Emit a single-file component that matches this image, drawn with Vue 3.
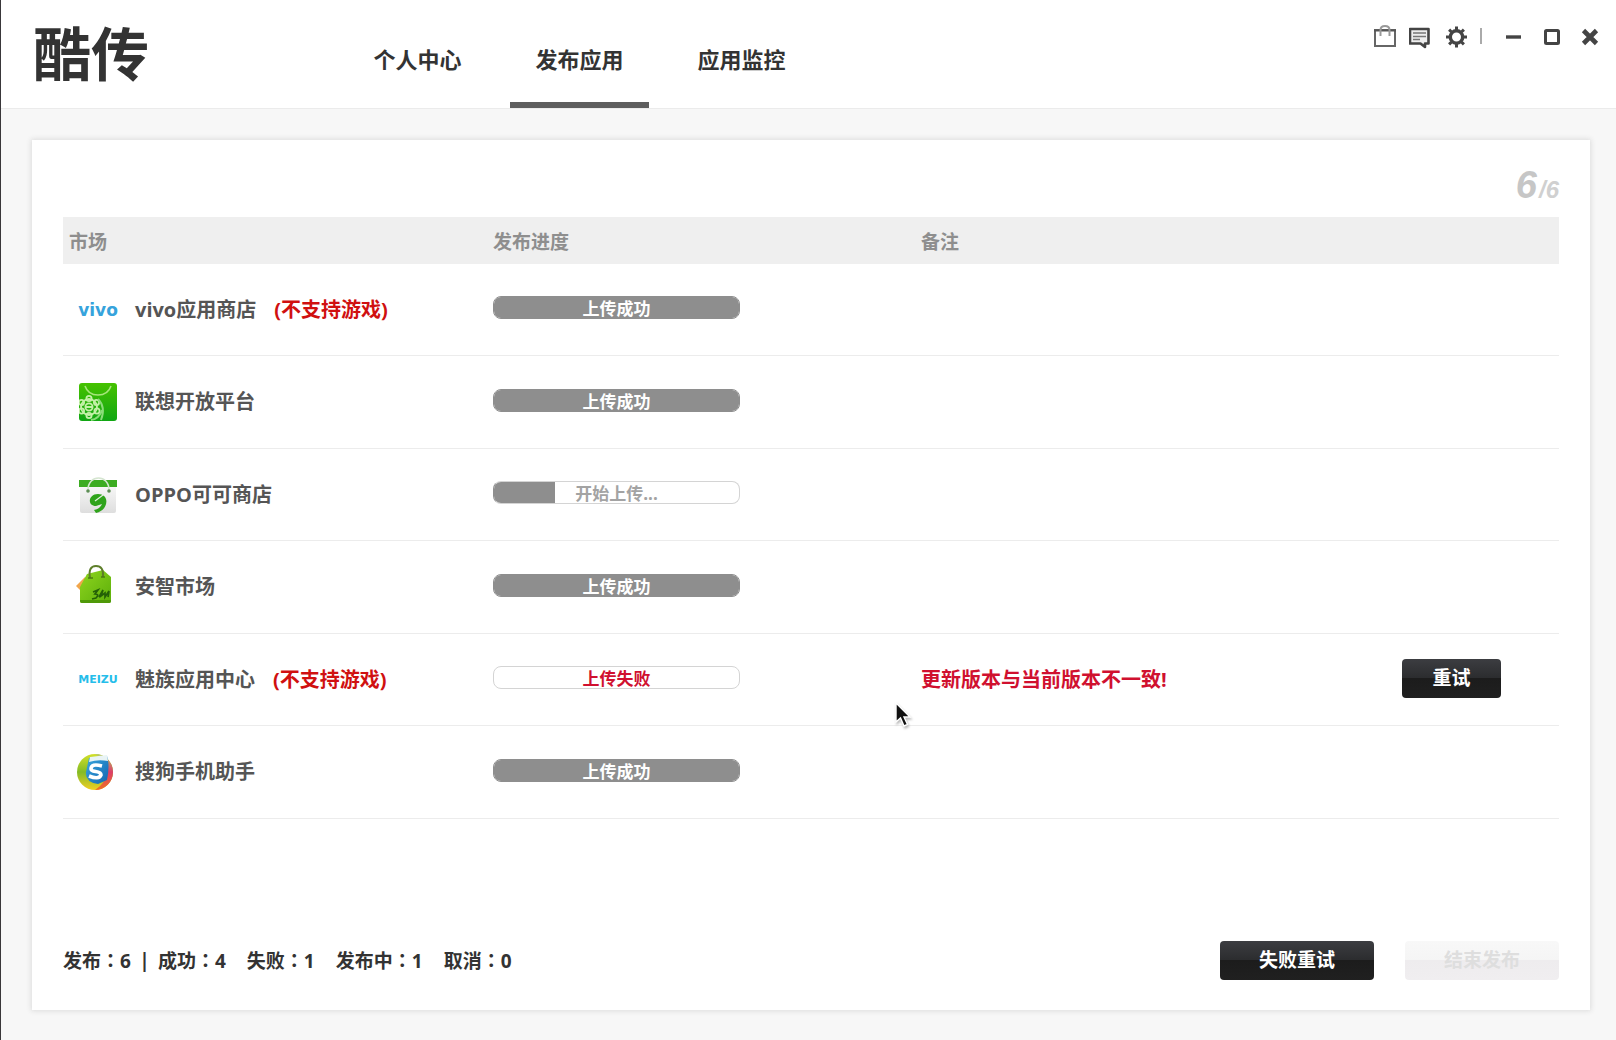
<script setup>
import { ref } from 'vue'

const tabs = ref([
  { label: '个人中心', active: false },
  { label: '发布应用', active: true },
  { label: '应用监控', active: false },
])

const markets = ref([
  { icon: 'vivo', name: 'vivo应用商店', note: '(不支持游戏)', state: 'done', label: '上传成功', progress: 100 },
  { icon: 'lenovo', name: '联想开放平台', state: 'done', label: '上传成功', progress: 100 },
  { icon: 'oppo', name: 'OPPO可可商店', state: 'running', label: '开始上传...', progress: 25 },
  { icon: 'anzhi', name: '安智市场', state: 'done', label: '上传成功', progress: 100 },
  { icon: 'meizu', name: '魅族应用中心', note: '(不支持游戏)', state: 'failed', label: '上传失败', progress: 0, remark: '更新版本与当前版本不一致!' },
  { icon: 'sogou', name: '搜狗手机助手', state: 'done', label: '上传成功', progress: 100 },
])

const totals = ref([
  { label: '成功', value: 4 },
  { label: '失败', value: 1 },
  { label: '发布中', value: 1 },
  { label: '取消', value: 0 },
])
</script>

<template>
  <div class="window">
    <header class="topbar">
      <h1 class="brand">酷传</h1>
      <nav class="tabs">
        <a v-for="tab in tabs" :key="tab.label" href="#" class="tab" :class="{ active: tab.active }">{{ tab.label }}</a>
      </nav>
      <div class="tools">
        <div class="tool-group">
          <button type="button" class="tool" aria-label="商店">
            <svg viewBox="0 0 24 24" fill="none" stroke="#666">
              <rect x="2" y="5" width="20" height="16" stroke-width="2" />
              <path d="M1 5.500H23" stroke="#555" stroke-width="2" />
              <path d="M7.500 11V5Q7.500 1 12 1T16.500 5V11" stroke="#999" stroke-width="2" />
            </svg>
          </button>
          <button type="button" class="tool" aria-label="消息">
            <svg viewBox="0 0 24 24" fill="none" stroke="#444">
              <path d="M1 4H19.500V18.500H16V22L11.500 18.500H1Z" fill="#eee" stroke-width="2.600" stroke-linejoin="round" />
              <path d="M4 8H17M4 11.500H17M4 14.500H11" stroke="#777" stroke-width="1.600" />
            </svg>
          </button>
          <button type="button" class="tool" aria-label="设置">
            <svg viewBox="0 0 24 24" fill="none" stroke="#444">
              <circle cx="11.500" cy="12" r="6.200" stroke-width="3.400" />
              <path d="M11.500 1.500V5M11.500 19V22.500M1 12H4.500M18.500 12H22M4.100 4.600L6.500 7M16.500 17L18.900 19.400M4.100 19.400L6.500 17M16.500 7L18.900 4.600" stroke-width="3" />
            </svg>
          </button>
        </div>
        <span class="divider"></span>
        <div class="tool-group window-controls">
          <button type="button" class="tool" aria-label="最小化">
            <svg viewBox="0 0 24 24" stroke="#444"><path d="M4 12H19" stroke-width="3.400" /></svg>
          </button>
          <button type="button" class="tool" aria-label="最大化">
            <svg viewBox="0 0 24 24" fill="none" stroke="#444"><rect x="5.500" y="5.500" width="13" height="13" rx="1" stroke-width="3" /></svg>
          </button>
          <button type="button" class="tool" aria-label="关闭">
            <svg viewBox="0 0 24 24" stroke="#444"><path d="M5.500 5.500L18.500 18.500M18.500 5.500L5.500 18.500" stroke-width="4.600" /></svg>
          </button>
        </div>
      </div>
    </header>

    <main class="content">
      <section class="card">
        <p class="counter"><b>6</b><span>/6</span></p>

        <table class="markets">
          <colgroup>
            <col class="col-market" />
            <col class="col-progress" />
            <col />
            <col class="col-action" />
          </colgroup>
          <thead>
            <tr>
              <th class="first">市场</th>
              <th>发布进度</th>
              <th>备注</th>
              <th></th>
            </tr>
          </thead>
          <tbody>
            <tr v-for="m in markets" :key="m.name">
              <td>
                <div class="market">
                  <span class="logo">
                    <span v-if="m.icon === 'vivo'" class="word vivo">vivo</span>
                    <svg v-else-if="m.icon === 'lenovo'" viewBox="0 0 40 40">
                      <defs>
                        <linearGradient id="lenovo-bg" x1="0" y1="0" x2="0" y2="1">
                          <stop offset="0" stop-color="#46c200" />
                          <stop offset="1" stop-color="#10a613" />
                        </linearGradient>
                        <clipPath id="lenovo-clip"><rect x="1" y="1" width="38" height="38" rx="3" /></clipPath>
                      </defs>
                      <rect x="1" y="1" width="38" height="38" rx="3" fill="url(#lenovo-bg)" />
                      <g clip-path="url(#lenovo-clip)" fill="none" stroke="#c4f0a8">
                        <path d="M7 4Q10 13 20 13T33 4" stroke="#a5e67a" stroke-width="1.600" />
                        <g stroke-width="1.800">
                          <circle cx="11" cy="25" r="3.600" />
                          <circle cx="11" cy="25" r="8" />
                          <circle cx="11" cy="16.500" r="2.600" />
                          <circle cx="18.500" cy="20.500" r="2.600" />
                          <circle cx="19" cy="29" r="2.600" />
                          <circle cx="11" cy="33.500" r="2.600" />
                          <circle cx="3.500" cy="29" r="2.600" />
                          <circle cx="3.500" cy="20.500" r="2.600" />
                          <path d="M8 25H14" />
                        </g>
                        <path d="M20 17Q28 25 23 38M13 38Q21 37 24 28" stroke="#8bdc79" stroke-width="2" />
                      </g>
                    </svg>
                    <svg v-else-if="m.icon === 'oppo'" viewBox="0 0 40 40">
                      <defs>
                        <linearGradient id="oppo-bag" x1="0" y1="0" x2="0" y2="1">
                          <stop offset="0" stop-color="#f7f7f7" />
                          <stop offset="1" stop-color="#dedede" />
                        </linearGradient>
                      </defs>
                      <path d="M2 11H38V36Q38 38 36 38H4Q2 38 2 36Z" fill="url(#oppo-bag)" />
                      <rect x="1" y="5" width="38" height="7" fill="#3cac22" />
                      <path d="M10 15C10 -1 31 -1 31 15" fill="none" stroke="#d5e5d0" stroke-width="1.600" />
                      <circle cx="10" cy="16" r="1.800" fill="#5d8e55" />
                      <circle cx="31" cy="16" r="1.800" fill="#5d8e55" />
                      <path d="M20 19C10 19 9 31 18 31L24 29Q22 34 16 35L18 38C28 36 31 25 26 21Q24 19 20 19Z" fill="#2fa31b" />
                      <path d="M17 26L25 20" stroke="#e4f2e0" stroke-width="1.200" />
                    </svg>
                    <svg v-else-if="m.icon === 'anzhi'" viewBox="0 2 40 40">
                      <defs>
                        <linearGradient id="anzhi-bag" x1="0" y1="0" x2="1" y2="1">
                          <stop offset="0" stop-color="#8fd51f" />
                          <stop offset="1" stop-color="#5caf0a" />
                        </linearGradient>
                      </defs>
                      <path d="M-2 21L7 12L11 23L3 26Z" fill="#f1a64c" />
                      <path d="M9 9L25 5L33 12V36Q33 38 31 38H4Q2 38 2 36V22Z" fill="url(#anzhi-bag)" />
                      <path d="M2 35V36Q2 38 4 38H31Q33 38 33 36V35Z" fill="#4f9908" />
                      <path d="M12 13Q10 1 18 1T25 12" fill="none" stroke="#5e7e2a" stroke-width="2" />
                      <path d="M10 13H15M23 12H27" stroke="#4b7c10" stroke-width="1.500" />
                      <path d="M15 27L20 25L17 29Q22 29 18 33L14 34M21 32L25 25L23 31L27 28V32L31 26L30 32" fill="none" stroke="#246007" stroke-width="1.700" />
                    </svg>
                    <span v-else-if="m.icon === 'meizu'" class="word meizu">MEIZU</span>
                    <svg v-else viewBox="0 0 40 40">
                      <defs>
                        <linearGradient id="sogou-left" x1="0" y1="0" x2="0" y2="1">
                          <stop offset="0" stop-color="#d3e02a" />
                          <stop offset=".5" stop-color="#83bb25" />
                          <stop offset="1" stop-color="#f1cf23" />
                        </linearGradient>
                        <linearGradient id="sogou-right" x1="0" y1="0" x2="0" y2="1">
                          <stop offset="0" stop-color="#b4cc69" />
                          <stop offset=".5" stop-color="#dd3d69" />
                          <stop offset="1" stop-color="#ef7125" />
                        </linearGradient>
                        <linearGradient id="sogou-mid" x1="0" y1="0" x2="1" y2="1">
                          <stop offset="0" stop-color="#3aa9df" />
                          <stop offset="1" stop-color="#1265b1" />
                        </linearGradient>
                      </defs>
                      <circle cx="17" cy="20" r="18" fill="url(#sogou-left)" />
                      <path d="M17 2A18 18 0 0 1 17 38Q28 31 29 20T17 2Z" fill="url(#sogou-right)" />
                      <path d="M11 6L29 4Q32 13 29 28L20 32Q7 30 8 20Z" fill="url(#sogou-mid)" />
                      <path d="M12 5L29 3L30 9Q20 7 11 10Z" fill="#e9f4f5" />
                      <path d="M24 14Q13 11 13 17C13 21 23 18 23 23Q21 28 11 24" fill="none" stroke="#fff" stroke-width="3.600" />
                    </svg>
                  </span>
                  <span class="name">{{ m.name }}</span>
                  <span v-if="m.note" class="note">{{ m.note }}</span>
                </div>
              </td>
              <td class="progress">
                <div class="bar" :class="m.state" role="progressbar" :aria-valuenow="m.progress">
                  <span class="fill" :style="{ width: m.progress + '%' }"></span>
                  <span class="bar-label">{{ m.label }}</span>
                </div>
              </td>
              <td class="remark">{{ m.remark }}</td>
              <td class="action">
                <button v-if="m.state === 'failed'" type="button" class="btn small">重试</button>
              </td>
            </tr>
          </tbody>
        </table>

        <footer class="summary">
          <p class="totals">
            <span>发布<i class="colon">：</i>6</span>
            <span class="pipe">|</span>
            <span v-for="t in totals" :key="t.label" class="total">{{ t.label }}<i class="colon">：</i>{{ t.value }}</span>
          </p>
          <div class="actions">
            <button type="button" class="btn">失败重试</button>
            <button type="button" class="btn" disabled>结束发布</button>
          </div>
        </footer>
      </section>
    </main>

    <svg class="pointer" viewBox="0 0 20 28" aria-hidden="true">
      <path d="M2 2V21L6.500 17L10 25L13.500 23.500L10 16H16Z" fill="#111" stroke="#fff" stroke-width="1.400" />
    </svg>
  </div>
</template>

<style>
body {
  margin: 0;
  background: #f7f7f7;
}
</style>

<style scoped>
.window {
  position: relative;
  box-sizing: border-box;
  min-height: 100vh;
  display: flex;
  flex-direction: column;
  border-left: 1px solid #39373a;
  background: #f7f7f7;
  color: #333;
  font-family: "Open Sans", "Noto Sans CJK SC", sans-serif;
  font-weight: 700;
}

.topbar {
  display: flex;
  height: 108px;
  background: #fff;
  border-bottom: 1px solid #ebebeb;
}

.brand {
  box-sizing: border-box;
  width: 347px;
  margin: 0;
  padding-left: 32px;
  font-size: 58px;
  line-height: 102px;
  font-weight: 700;
  font-family: "Noto Sans CJK SC", sans-serif;
}

.tabs {
  display: flex;
  gap: 23px;
}

.tab {
  box-sizing: border-box;
  width: 139px;
  height: 108px;
  padding-top: 4px;
  border-bottom: 6px solid transparent;
  font-size: 22px;
  line-height: 110px;
  text-align: center;
  text-decoration: none;
  color: #333;
}

.tab.active {
  border-bottom-color: #5e5e5e;
}

.tools {
  display: flex;
  margin-left: auto;
  padding: 25px 14px 0 0;
}

.tool-group {
  display: flex;
  gap: 12px;
}

.window-controls {
  gap: 14px;
}

.tool {
  width: 24px;
  height: 24px;
  padding: 0;
  border: 0;
  background: none;
}

.tool svg {
  display: block;
  width: 24px;
  height: 24px;
}

.divider {
  width: 2px;
  height: 16px;
  margin: 3px 20px 0 11px;
  background: #aaa;
}

.content {
  flex: 1;
  display: flex;
  padding: 31px 26px 30px 31px;
}

.card {
  flex: 1;
  box-sizing: border-box;
  display: flex;
  flex-direction: column;
  padding: 20px 31px 30px;
  background: #fff;
  box-shadow: 0 0 5px 1px #dcdcdc;
}

.counter {
  margin: 0;
  height: 57px;
  line-height: 50px;
  text-align: right;
  font-family: "Liberation Sans", sans-serif;
  font-style: italic;
  font-size: 24px;
  color: #d0d0d0;
}

.counter b {
  margin-right: 2px;
  font-size: 38px;
  color: #c6c6c6;
}

.markets {
  width: 100%;
  table-layout: fixed;
  border-collapse: separate;
  border-spacing: 0;
}

.col-market {
  width: 430px;
}

.col-progress {
  width: 428px;
}

.col-action {
  width: 157px;
}

th {
  height: 45px;
  padding: 2px 0 0;
  background: #efefef;
  text-align: left;
  font-size: 19px;
  line-height: 24px;
  color: #8e8e8e;
}

th.first {
  padding-left: 6px;
}

td {
  box-sizing: border-box;
  height: 92px;
  padding: 0;
  border-bottom: 1px solid #ececec;
  vertical-align: middle;
}

tr:nth-child(even) td {
  height: 93px;
}

td.progress {
  padding-bottom: 4px;
}

td.action {
  padding-bottom: 2px;
}

.market {
  display: flex;
  align-items: center;
  font-size: 20px;
  line-height: 28px;
  color: #555;
}

.logo {
  display: flex;
  justify-content: center;
  width: 40px;
  margin: 0 17px 0 15px;
}

.logo svg {
  width: 40px;
  height: 40px;
  overflow: visible;
}

.word {
  font-family: "DejaVu Sans", sans-serif;
}

.vivo {
  font-size: 17px;
  color: #36a3dc;
}

.meizu {
  font-size: 11px;
  color: #25bdea;
}

.note {
  margin-left: 18px;
  color: #d01010;
}

.bar {
  display: grid;
  box-sizing: border-box;
  width: 247px;
  height: 23px;
  border: 1px solid #d4d4d4;
  border-radius: 8px;
  overflow: hidden;
  font-size: 17px;
  line-height: 23px;
  text-align: center;
  color: #a3a3a3;
}

.bar > * {
  grid-area: 1 / 1;
}

.fill {
  background: #8e8e8e;
}

.bar.done {
  border-color: #8e8e8e;
  color: #fff;
}

.bar.running {
  border-left-color: #8e8e8e;
}

.bar.failed {
  color: #d0102f;
}

.remark {
  font-size: 20px;
  line-height: 28px;
  color: #d0102f;
}

.btn {
  width: 154px;
  height: 39px;
  padding: 0;
  border: 0;
  border-radius: 4px;
  background: linear-gradient(#3c3d41, #2b2c2e 50%, #1c1c1c 50%, #202020);
  font: inherit;
  font-size: 19px;
  line-height: 39px;
  color: #fff;
}

.btn.small {
  display: block;
  width: 99px;
}

.btn:disabled {
  background: linear-gradient(#f8f8f8, #f5f5f5 50%, #eeecee 50%, #f0eef0);
  color: #dedede;
}

.summary {
  display: flex;
  align-items: center;
  justify-content: space-between;
  margin-top: auto;
}

.totals {
  display: flex;
  margin: 0;
  font-size: 19px;
  line-height: 28px;
}

.pipe {
  width: 27px;
  text-align: center;
}

.total {
  margin-right: 21px;
}

.colon {
  font-style: normal;
  font-family: "Noto Sans CJK TC", sans-serif;
}

.actions {
  display: flex;
  gap: 31px;
}

.pointer {
  position: absolute;
  left: 893px;
  top: 701px;
  width: 20px;
  height: 28px;
  filter: drop-shadow(1px 2px 1px #bbb);
}
</style>
